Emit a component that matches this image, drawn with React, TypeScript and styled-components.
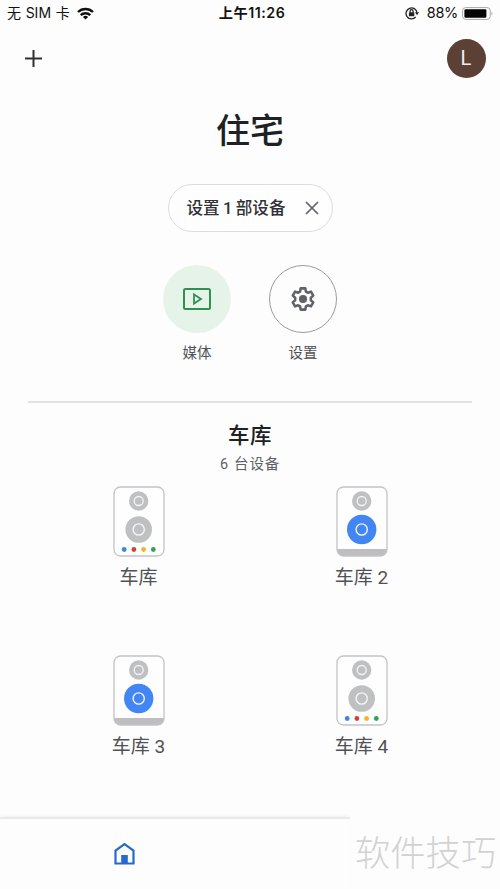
import React from 'react';
import styled, { createGlobalStyle } from 'styled-components';

const Global = createGlobalStyle`
  * { box-sizing: border-box; }
  body { margin: 0; background: #fdfdfd; }
  svg { display: block; flex: none; }
`;

const Screen = styled.main`
  width: 500px;
  height: 889px;
  display: flex;
  flex-direction: column;
  overflow: hidden;
  background: #fdfdfd;
  color: #202124;
  font-family: Roboto, 'Noto Sans CJK SC', sans-serif;
`;

const StatusBar = styled.div`
  height: 26px;
  flex: none;
  display: grid;
  grid-template-columns: 1fr auto 1fr;
  align-items: center;
  padding: 0 6px 2px 7px;
  color: #111;
  font: 14px/26px Inter, 'Noto Sans CJK SC', sans-serif;
  white-space: nowrap;
`;

const StatusSide = styled.div<{ $end?: boolean }>`
  display: flex;
  align-items: center;
  justify-content: ${(p) => (p.$end ? 'flex-end' : 'flex-start')};
  gap: ${(p) => (p.$end ? 4 : 7)}px;
`;

const Carrier = styled.span`
  word-spacing: 0.7px;
`;

const Percent = styled.span`
  margin-left: 4px;
  font-size: 14.5px;
  letter-spacing: -0.3px;
`;

const Clock = styled.span`
  font-weight: 600;
  font-size: 14.2px;
  letter-spacing: 0.55px;
  margin-left: 3px;
`;

const Toolbar = styled.header`
  height: 64px;
  flex: none;
  display: flex;
  align-items: center;
  justify-content: space-between;
  padding: 0 14px 0 25px;
`;

const Avatar = styled.div`
  width: 39px;
  height: 39px;
  border-radius: 50%;
  display: grid;
  place-items: center;
  background: #5c4036;
  color: #f4efed;
  font: 20px/39px Roboto, sans-serif;
  padding-right: 1px;
`;

const Title = styled.h1`
  margin: 16px 0 0;
  flex: none;
  text-align: center;
  font-size: 34px;
  line-height: 50px;
  font-weight: 500;
`;

const Pill = styled.button`
  width: 165px;
  height: 48px;
  flex: none;
  margin: 28px auto 0;
  padding: 2px 13px 0 18px;
  display: flex;
  align-items: center;
  justify-content: space-between;
  border: 1.5px solid #dcdddf;
  border-radius: 24px;
  background: #fefefe;
  color: #303134;
  font: 500 16.6px/44px Roboto, 'Noto Sans CJK SC', sans-serif;
  word-spacing: -0.8px;
  white-space: nowrap;
`;

const CloseIcon = styled.svg`
  margin-top: -2px;
`;

const Actions = styled.div`
  display: flex;
  justify-content: center;
  gap: 38px;
  margin-top: 33px;
  flex: none;
`;

const Action = styled.div`
  display: flex;
  flex-direction: column;
  align-items: center;
  font-size: 14.5px;
  line-height: 22px;
  color: #505256;
  gap: 10px;
`;

const ActionCircle = styled.div<{ $filled?: boolean }>`
  width: 68px;
  height: 68px;
  border-radius: 50%;
  display: grid;
  place-items: center;
  background: ${(p) => (p.$filled ? '#e5f3e9' : 'transparent')};
  border: ${(p) => (p.$filled ? '0' : '1px solid #999b9e')};
`;

const Divider = styled.hr`
  width: 444px;
  height: 2px;
  flex: none;
  margin: 36px auto 0;
  border: 0;
  background: #e2e2e3;
`;

const RoomHeading = styled.h2`
  margin: 18px 0 0;
  flex: none;
  text-align: center;
  font-size: 21.5px;
  line-height: 30px;
  font-weight: 500;
  letter-spacing: 0.5px;
`;

const RoomCount = styled.p`
  margin: 3px 0 0;
  flex: none;
  text-align: center;
  color: #5f6368;
  font-size: 14.5px;
  line-height: 22px;
  letter-spacing: 0.8px;
  word-spacing: 0.8px;
`;

const DeviceGrid = styled.section`
  display: grid;
  grid-template-columns: 223px 223px;
  grid-auto-rows: 169px;
  justify-content: center;
  margin-top: 10px;
  flex: none;
  height: 331px;
`;

const Device = styled.div`
  display: flex;
  flex-direction: column;
  align-items: center;
  gap: 7px;
  color: #505256;
  font-size: 19px;
  line-height: 28px;
`;

const Footer = styled.footer`
  flex: 1;
  display: flex;
`;

const NavBar = styled.nav`
  width: 350px;
  padding: 23px 0 0 114px;
  border-top: 2px solid #e9e9e9;
  box-shadow: 0 -2px 3px -1px #f1f1f1;
`;

const Watermark = styled.div`
  padding: 8px 0 0 5px;
  font: 300 35.3px/52px 'Noto Sans CJK SC', sans-serif;
  color: #d2d2d2;
  white-space: nowrap;
`;

const DOTS = ['#4285d4', '#c84538', '#efb52d', '#34a060'];

function Speaker({ active }: { active: boolean }) {
  return (
    <svg width="52" height="71" viewBox="0 0 52 71">
      <rect x="1" y="1" width="50" height="69" rx="6.5" fill="#fefefe" />
      {active && <path d="M1 63h50v1a6 6 0 0 1-6 6H7a6 6 0 0 1-6-6z" fill="#bebec0" />}
      <rect x="1" y="1" width="50" height="69" rx="6.5" fill="none" stroke="#c3c4c6" strokeWidth="1.3" />
      <circle cx="25.7" cy="15" r="9.7" fill="#bfc0c2" />
      <circle cx="25.7" cy="15" r="4.5" fill="none" stroke="#f4f4f4" strokeWidth="1.3" />
      <circle cx="25.7" cy="43.5" r={active ? 14.7 : 13.3} fill={active ? '#4285f4' : '#bfc0c2'} />
      <circle cx="25.7" cy="43.5" r="5.6" fill="none" stroke="#f4f6fa" strokeWidth="1.4" />
      {!active && DOTS.map((c, i) => <circle key={c} cx={11.2 + i * 9.7} cy="63.5" r="2.4" fill={c} />)}
    </svg>
  );
}

const DEVICES = [
  { name: '车库', active: false },
  { name: '车库 2', active: true },
  { name: '车库 3', active: true },
  { name: '车库 4', active: false },
];

export default function App() {
  return (
    <>
      <Global />
      <Screen>
        <StatusBar>
          <StatusSide>
            <Carrier>无 SIM 卡</Carrier>
            <svg width="17" height="13" viewBox="0 0 17 13" fill="none" stroke="#111" strokeWidth="2.4">
              <path d="M1 5a10.8 10.8 0 0 1 15 0" />
              <path d="M3.7 8.2a7 7 0 0 1 9.6 0" />
              <path d="M8.5 12.5 5.9 9.9a3.8 3.8 0 0 1 5.2 0z" fill="#111" stroke="none" />
            </svg>
          </StatusSide>
          <Clock>上午11:26</Clock>
          <StatusSide $end>
            <svg width="14" height="14" viewBox="0 0 14 14" fill="none" stroke="#222" strokeWidth="1.3">
              <path d="M10.7 11A5.5 5.5 0 1 1 12 6.7" />
              <path d="M10 6.3h4l-2 3z" fill="#222" stroke="none" />
              <rect x="3.9" y="6.2" width="5.4" height="4" rx=".5" fill="#222" stroke="none" />
              <path d="M5.1 6.4V5.2a1.5 1.5 0 0 1 3 0v1.2" />
            </svg>
            <Percent>88%</Percent>
            <svg width="32" height="13" viewBox="0 0 32 13">
              <rect x=".6" y=".6" width="27.6" height="11.8" rx="3" fill="none" stroke="#a8a8a8" />
              <rect x="2.4" y="2.2" width="22" height="8.6" rx="1.2" fill="#050505" />
              <path d="M29.5 4.4q2 2 0 4.2z" fill="#aaa" />
            </svg>
          </StatusSide>
        </StatusBar>
        <Toolbar>
          <svg width="17" height="17" viewBox="0 0 17 17" stroke="#303134" strokeWidth="2">
            <path d="M8.5 0v17M0 8.5h17" />
          </svg>
          <Avatar>L</Avatar>
        </Toolbar>
        <Title>住宅</Title>
        <Pill>
          设置 1 部设备
          <CloseIcon width="14" height="14" viewBox="0 0 14 14" stroke="#5f6368" strokeWidth="1.7">
            <path d="m1 1 12 12M13 1 1 13" />
          </CloseIcon>
        </Pill>
        <Actions>
          <Action>
            <ActionCircle $filled>
              <svg width="28" height="22" viewBox="0 0 28 22" fill="none" stroke="#2f9150" strokeWidth="2">
                <rect x="1" y="1" width="26" height="20" rx="1.5" />
                <path d="M11 6.5v9l7-4.5z" strokeWidth="1.8" />
              </svg>
            </ActionCircle>
            媒体
          </Action>
          <Action>
            <ActionCircle>
              <svg width="28" height="28" viewBox="0 0 24 24" fill="none" stroke="#5f6368" strokeWidth="2.2" strokeLinejoin="round">
                <path d="M10 2.9h4l.5 2.7 1.7 1 2.6-.9 2 3.4-2.1 1.8v2.2l2.1 1.8-2 3.4-2.6-.9-1.7 1-.5 2.7h-4l-.5-2.7-1.7-1-2.6.9-2-3.4 2.1-1.8v-2.2L3.2 9.1l2-3.4 2.6.9 1.7-1z" />
                <circle cx="12" cy="12" r="3.5" fill="#5f6368" stroke="none" />
              </svg>
            </ActionCircle>
            设置
          </Action>
        </Actions>
        <Divider />
        <RoomHeading>车库</RoomHeading>
        <RoomCount>6 台设备</RoomCount>
        <DeviceGrid>
          {DEVICES.map((d) => (
            <Device key={d.name}>
              <Speaker active={d.active} />
              {d.name}
            </Device>
          ))}
        </DeviceGrid>
        <Footer>
          <NavBar>
            <svg width="21" height="23" viewBox="0 0 21 23" fill="none" stroke="#2869cc" strokeWidth="2.2">
              <path d="M1.5 21.5V8.5L10.5 2l9 6.5v13z" />
              <path d="M7.2 13h6.6v8.500H7.2z" fill="#2869cc" stroke="none" />
            </svg>
          </NavBar>
          <Watermark>软件技巧</Watermark>
        </Footer>
      </Screen>
    </>
  );
}
